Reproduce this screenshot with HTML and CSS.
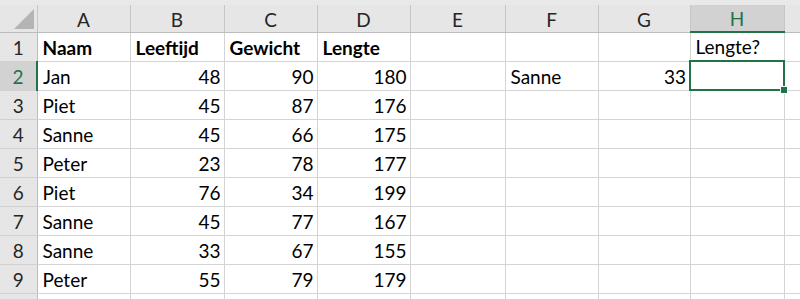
FILE: index.html
```html
<!DOCTYPE html>
<html lang="nl">
<head>
    <meta charset="UTF-8">
    <title>Werkblad</title>
    <link rel="stylesheet" href="styles.css">
</head>
<body>
    <div class="sheet">
        <div class="top-strip"></div>
        <table class="grid">
            <colgroup>
                <col class="c-head">
                <col class="c-a"><col class="c-b"><col class="c-c"><col class="c-d">
                <col class="c-e"><col class="c-f"><col class="c-g"><col class="c-h">
                <col class="c-i">
            </colgroup>
            <thead>
                <tr>
                    <th class="corner"><span class="tri"></span></th>
                    <th>A</th><th>B</th><th>C</th><th>D</th><th>E</th><th>F</th><th>G</th>
                    <th class="sel">H</th><th></th>
                </tr>
            </thead>
            <tbody>
                <tr>
                    <th>1</th>
                    <td class="b">Naam</td><td class="b">Leeftijd</td><td class="b">Gewicht</td><td class="b">Lengte</td>
                    <td></td><td></td><td></td><td>Lengte?</td><td></td>
                </tr>
                <tr>
                    <th class="sel">2</th>
                    <td>Jan</td><td class="n">48</td><td class="n">90</td><td class="n">180</td>
                    <td></td><td>Sanne</td><td class="n">33</td><td class="active"><span class="handle"></span></td><td></td>
                </tr>
                <tr>
                    <th>3</th>
                    <td>Piet</td><td class="n">45</td><td class="n">87</td><td class="n">176</td>
                    <td></td><td></td><td></td><td></td><td></td>
                </tr>
                <tr>
                    <th>4</th>
                    <td>Sanne</td><td class="n">45</td><td class="n">66</td><td class="n">175</td>
                    <td></td><td></td><td></td><td></td><td></td>
                </tr>
                <tr>
                    <th>5</th>
                    <td>Peter</td><td class="n">23</td><td class="n">78</td><td class="n">177</td>
                    <td></td><td></td><td></td><td></td><td></td>
                </tr>
                <tr>
                    <th>6</th>
                    <td>Piet</td><td class="n">76</td><td class="n">34</td><td class="n">199</td>
                    <td></td><td></td><td></td><td></td><td></td>
                </tr>
                <tr>
                    <th>7</th>
                    <td>Sanne</td><td class="n">45</td><td class="n">77</td><td class="n">167</td>
                    <td></td><td></td><td></td><td></td><td></td>
                </tr>
                <tr>
                    <th>8</th>
                    <td>Sanne</td><td class="n">33</td><td class="n">67</td><td class="n">155</td>
                    <td></td><td></td><td></td><td></td><td></td>
                </tr>
                <tr>
                    <th>9</th>
                    <td>Peter</td><td class="n">55</td><td class="n">79</td><td class="n">179</td>
                    <td></td><td></td><td></td><td></td><td></td>
                </tr>
                <tr>
                    <th></th>
                    <td></td><td></td><td></td><td></td><td></td><td></td><td></td><td></td><td></td>
                </tr>
            </tbody>
        </table>
    </div>
</body>
</html>
```

FILE: styles.css
```css
/* Page */
body {
    margin: 0;
    background-color: #fff;
    font-family: Lato, "Open Sans", sans-serif;
    font-size: 19px;
    color: #000;
    overflow: hidden;
}

.sheet {
    width: 800px;
    height: 299px;
    overflow: hidden;
}

.top-strip {
    height: 5px;
    background-color: #e9e9e9;
}

/* Grid */
.grid {
    border-collapse: collapse;
    table-layout: fixed;
    width: 800px;
}

.c-head { width: 37px; }
.c-a { width: 93px; }
.c-b { width: 94px; }
.c-c { width: 93px; }
.c-d { width: 93px; }
.c-e { width: 95px; }
.c-f { width: 93px; }
.c-g { width: 92px; }
.c-h { width: 94px; }
.c-i { width: 16px; }

.grid tbody tr {
    height: 29px;
}

.grid thead tr {
    height: 27px;
}

.grid td {
    padding: 0 5px 3px;
    border-right: 1px solid #d4d4d4;
    border-bottom: 1px solid #d4d4d4;
    vertical-align: bottom;
    white-space: nowrap;
    line-height: 20px;
}

.grid td.b {
    font-weight: bold;
}

.grid td.n {
    text-align: right;
    padding-right: 3px;
}

/* Headers */
.grid thead th {
    padding: 0 0 2px;
    background-color: #e6e6e6;
    border-right: 1px solid #c6c6c6;
    border-bottom: 1px solid #bcbcbc;
    font-weight: normal;
    color: #262626;
    text-align: center;
    vertical-align: bottom;
    line-height: 20px;
}

.grid tbody th {
    padding: 0 0 3px;
    background-color: #e6e6e6;
    border-right: 1px solid #bcbcbc;
    border-bottom: 1px solid #d0d0d0;
    font-weight: normal;
    color: #262626;
    text-align: center;
    vertical-align: bottom;
    line-height: 20px;
}

.grid thead th.sel {
    background-color: #d2d2d2;
    color: #217346;
    border-bottom: 2px solid #217346;
}

.grid tbody th.sel {
    background-color: #d2d2d2;
    color: #217346;
    border-right: 2px solid #217346;
}

.corner {
    position: relative;
}

.tri {
    position: absolute;
    right: 3px;
    bottom: 3px;
    width: 0;
    height: 0;
    border-left: 20px solid transparent;
    border-bottom: 20px solid #b4b4b4;
}

/* Active cell */
.grid td.active {
    position: relative;
    border: 2px solid #217346;
}

.handle {
    position: absolute;
    right: -5px;
    bottom: -5px;
    width: 6px;
    height: 6px;
    background-color: #217346;
    border: 1px solid #fff;
}
```
